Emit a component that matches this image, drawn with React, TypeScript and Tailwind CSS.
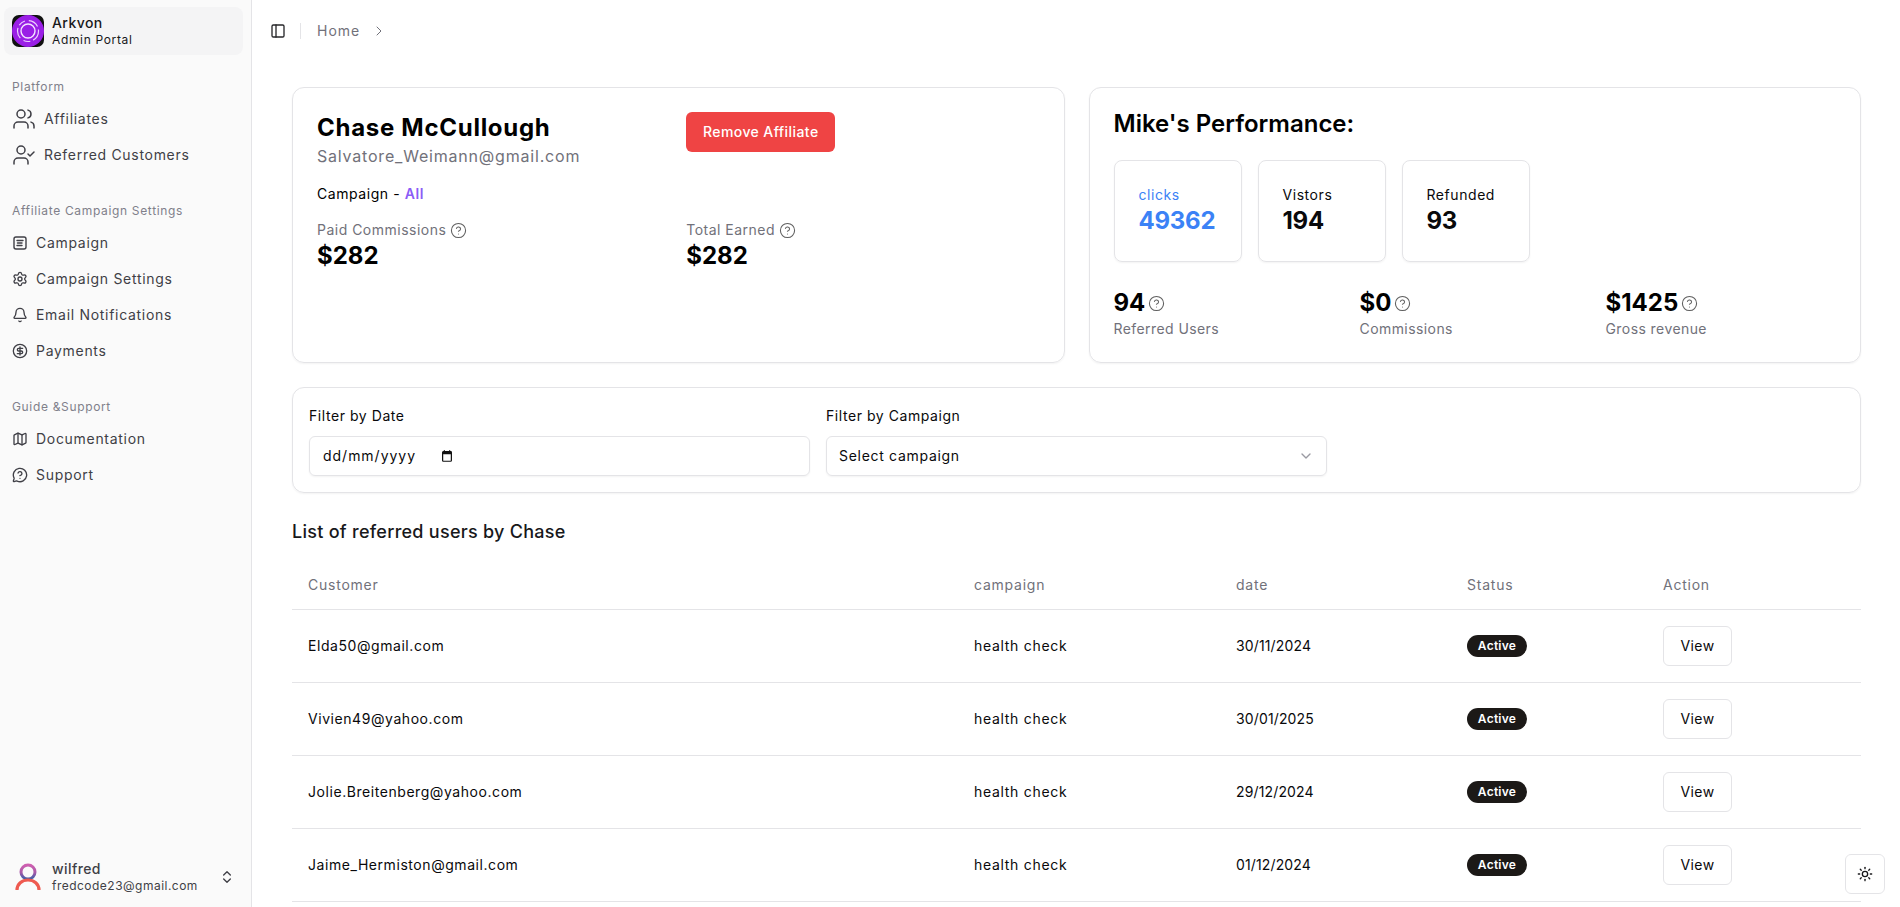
import {
  Bell,
  ChevronDown,
  ChevronRight,
  ChevronsUpDown,
  CircleDollarSign,
  CircleHelp,
  Map,
  MessageCircleQuestion,
  PanelLeft,
  Settings,
  Sun,
  UserCheck,
  Users,
} from 'lucide-react'

const font = { fontFamily: 'Inter, "Liberation Sans", sans-serif' }

const referred = [
  { email: 'Elda50@gmail.com', date: '30/11/2024' },
  { email: 'Vivien49@yahoo.com', date: '30/01/2025' },
  { email: 'Jolie.Breitenberg@yahoo.com', date: '29/12/2024' },
  { email: 'Jaime_Hermiston@gmail.com', date: '01/12/2024' },
]

function CampaignIcon() {
  return (
    <svg viewBox="0 0 16 16" fill="none" stroke="currentColor" strokeWidth="1.4" strokeLinecap="round" className="w-4 h-4 shrink-0">
      <rect x="2" y="2" width="12" height="12" rx="2" />
      <path d="M5 5.5h6M5.5 8h4.5M5 10.5h5" />
    </svg>
  )
}

function Logo() {
  return (
    <svg viewBox="0 0 32 32" className="w-8 h-8 shrink-0">
      <rect width="32" height="32" rx="7" fill="#111" />
      <circle cx="16" cy="16" r="16" fill="#9a1fe6" />
      <circle cx="16" cy="16" r="7" fill="none" stroke="#f4e6ff" strokeWidth="1.4" />
      <circle cx="16" cy="16" r="10.5" fill="none" stroke="#eccfff" strokeWidth="1.2" strokeDasharray="11 3 7 4" />
    </svg>
  )
}

function UserAvatar() {
  return (
    <svg viewBox="0 0 28 28" className="w-7 h-7 shrink-0">
      <defs>
        <linearGradient id="head" x1="0" y1="0" x2="0" y2="1">
          <stop offset="0" stopColor="#cf5fb0" />
          <stop offset="0.55" stopColor="#a65aa8" />
          <stop offset="1" stopColor="#3a5fa8" />
        </linearGradient>
      </defs>
      <circle cx="14" cy="9" r="7" fill="none" stroke="url(#head)" strokeWidth="3" />
      <path d="M3 27c0-6 5-10 11-10s11 4 11 10" fill="none" stroke="#ee5a50" strokeWidth="3.2" />
    </svg>
  )
}

function NavLabel({ children }: { children: string }) {
  return <div className="h-8 px-3 flex items-center text-xs text-[#80808a] tracking-[0.055em]">{children}</div>
}

function NavLink({ icon, label }: { icon: React.ReactNode; label: string }) {
  return (
    <a className="h-9 flex items-center gap-2 px-3 text-sm text-[#3f3f46] tracking-[0.05em]">
      {icon}
      {label}
    </a>
  )
}

function HelpIcon() {
  return <CircleHelp className="w-[17px] h-[17px] text-[#5f5f5f] shrink-0" strokeWidth={1.5} />
}

function StatBox({ label, value, blue }: { label: string; value: string; blue?: boolean }) {
  return (
    <div className={`w-32 h-[102px] rounded-lg border border-[#e4e4e7] shadow-xs pl-6 pt-6 ${blue ? 'text-[#3b82f6]' : 'text-[#09090b]'}`}>
      <div className="text-sm leading-5 tracking-[0.04em]">{label}</div>
      <div className="text-2xl font-bold leading-8 -tracking-[0.01em]">{value}</div>
    </div>
  )
}

function BottomStat({ value, label }: { value: string; label: string }) {
  return (
    <div>
      <div className="flex items-center gap-[3px] text-2xl font-bold leading-8 text-black">
        {value}
        <HelpIcon />
      </div>
      <div className="text-sm leading-5 text-[#71717a] tracking-[0.03em]">{label}</div>
    </div>
  )
}

export default function App() {
  return (
    <div style={font} className="flex h-[907px] overflow-hidden bg-white text-[#09090b]">
      <aside className="w-[252px] shrink-0 h-full flex flex-col bg-[#fafafa] border-r border-[#e4e4e7]">
        <div className="pt-[7px] px-1">
          <div className="h-12 w-[239px] rounded-lg bg-[#f4f4f5] flex items-center gap-2 px-2">
            <Logo />
            <div>
              <div className="text-sm leading-[18px] font-medium tracking-[0.03em] text-[#18181b]">Arkvon</div>
              <div className="text-xs leading-4 tracking-[0.055em] text-[#18181b]">Admin Portal</div>
            </div>
          </div>
        </div>
        <div className="mt-4">
          <NavLabel>Platform</NavLabel>
          <div className="-mt-0.5">
            <NavLink icon={<Users className="w-6 h-6 shrink-0" strokeWidth={1.5} />} label="Affiliates" />
            <NavLink icon={<UserCheck className="w-6 h-6 shrink-0" strokeWidth={1.5} />} label="Referred Customers" />
          </div>
        </div>
        <div className="mt-[22px]">
          <NavLabel>Affiliate Campaign Settings</NavLabel>
          <div className="-mt-0.5">
            <NavLink icon={<CampaignIcon />} label="Campaign" />
            <NavLink icon={<Settings className="w-4 h-4 shrink-0" />} label="Campaign Settings" />
            <NavLink icon={<Bell className="w-4 h-4 shrink-0" />} label="Email Notifications" />
            <NavLink icon={<CircleDollarSign className="w-4 h-4 shrink-0" />} label="Payments" />
          </div>
        </div>
        <div className="mt-[22px]">
          <NavLabel>Guide &amp;Support</NavLabel>
          <div className="-mt-0.5">
            <NavLink icon={<Map className="w-4 h-4 shrink-0" />} label="Documentation" />
            <NavLink icon={<MessageCircleQuestion className="w-4 h-4 shrink-0" />} label="Support" />
          </div>
        </div>
        <div className="mt-auto h-12 mb-[6px] flex items-center pl-[14px] pr-4">
          <UserAvatar />
          <div className="ml-[10px] flex-1">
            <div className="text-sm leading-[18px] font-medium tracking-[0.03em] text-[#3f3f46]">wilfred</div>
            <div className="text-xs leading-4 tracking-[0.04em] text-[#3f3f46]">fredcode23@gmail.com</div>
          </div>
          <ChevronsUpDown className="w-4 h-4 text-[#3f3f46]" />
        </div>
      </aside>

      <main className="flex-1 min-w-0">
        <header className="h-[62px] flex items-center pl-[18px]">
          <PanelLeft className="w-4 h-4 text-[#27272a]" />
          <div className="w-px h-4 bg-[#e4e4e7] ml-[14px] mr-4" />
          <span className="text-sm text-[#71717a] tracking-[0.07em]">Home</span>
          <ChevronRight className="w-4 h-4 ml-[11px] text-[#71717a]" strokeWidth={1.5} />
        </header>

        <div className="pt-[25px] pl-10 pr-[39px]">
          <div className="grid grid-cols-2 gap-6">
            <section className="h-[276px] rounded-xl border border-[#e4e4e7] shadow-xs p-6">
              <div className="grid grid-cols-2 gap-x-4">
                <div>
                  <h2 className="text-2xl leading-8 font-bold text-black tracking-[0.03em] whitespace-nowrap">Chase McCullough</h2>
                  <div className="text-base leading-6 text-[#71717a] tracking-[0.05em] whitespace-nowrap">Salvatore_Weimann@gmail.com</div>
                </div>
                <div>
                  <button className="w-[149px] h-10 rounded-md bg-[#ef4444] text-white text-sm font-medium tracking-[0.03em]">
                    Remove Affiliate
                  </button>
                </div>
              </div>
              <div className="mt-4 text-sm leading-5 text-black tracking-[0.04em]">
                Campaign - <span className="font-semibold text-[#8b5cf6]">All</span>
              </div>
              <div className="mt-4 grid grid-cols-2 gap-x-4">
                <div>
                  <div className="flex items-center gap-1 text-sm leading-5 text-[#71717a] tracking-[0.035em]">
                    Paid Commissions <HelpIcon />
                  </div>
                  <div className="text-2xl font-bold leading-8 text-black">$282</div>
                </div>
                <div>
                  <div className="flex items-center gap-1 text-sm leading-5 text-[#71717a] tracking-[0.035em]">
                    Total Earned <HelpIcon />
                  </div>
                  <div className="text-2xl font-bold leading-8 text-black">$282</div>
                </div>
              </div>
            </section>

            <section className="h-[276px] rounded-xl border border-[#e4e4e7] shadow-xs p-6">
              <h2 className="text-2xl leading-6 font-semibold text-black">Mike's Performance:</h2>
              <div className="mt-6 flex gap-4">
                <StatBox label="clicks" value="49362" blue />
                <StatBox label="Vistors" value="194" />
                <StatBox label="Refunded" value="93" />
              </div>
              <div className="mt-[25px] grid grid-cols-3 w-[738px]">
                <BottomStat value="94" label="Referred Users" />
                <BottomStat value="$0" label="Commissions" />
                <BottomStat value="$1425" label="Gross revenue" />
              </div>
            </section>
          </div>

          <section className="mt-6 rounded-xl border border-[#e4e4e7] shadow-xs p-4">
            <div className="grid grid-cols-3 gap-4">
              <div>
                <div className="h-6 flex items-center text-sm tracking-[0.04em]">Filter by Date</div>
                <div className="mt-2 h-10 rounded-md border border-[#e4e4e7] shadow-xs flex items-center pl-[13px] text-sm tracking-[0.07em]">
                  dd/mm/yyyy
                  <svg viewBox="0 0 16 16" className="w-[14px] h-[14px] ml-6" fill="none" stroke="#111" strokeWidth="1.4">
                    <rect x="3" y="3" width="10" height="11" rx="1" />
                    <path d="M3 4.5h10" strokeWidth="3" />
                    <path d="M5 1.5v2M11 1.5v2" />
                  </svg>
                </div>
              </div>
              <div>
                <div className="h-6 flex items-center text-sm tracking-[0.04em]">Filter by Campaign</div>
                <div className="mt-2 h-10 rounded-md border border-[#e4e4e7] shadow-xs flex items-center justify-between px-3 text-sm tracking-[0.05em]">
                  Select campaign
                  <ChevronDown className="w-4 h-4 text-[#9a9aa2]" />
                </div>
              </div>
            </div>
          </section>

          <h3 className="mt-[25px] text-lg leading-7 font-medium tracking-[0.015em] text-[#18181b]">List of referred users by Chase</h3>

          <table className="mt-[15px] w-full text-sm border-collapse table-fixed">
            <thead>
              <tr className="h-[48px] border-b border-[#e4e4e7] text-left text-[#71717a] tracking-[0.055em]">
                <th className="w-[666px] pl-4 font-normal">Customer</th>
                <th className="w-[262px] pl-4 font-normal">campaign</th>
                <th className="w-[231px] pl-4 font-normal">date</th>
                <th className="w-[196px] pl-4 font-normal">Status</th>
                <th className="pl-4 font-normal">Action</th>
              </tr>
            </thead>
            <tbody>
              {referred.map((row) => (
                <tr key={row.email} className="h-[73px] border-b border-[#e4e4e7] text-[#09090b]">
                  <td className="pl-4 tracking-[0.04em]">{row.email}</td>
                  <td className="pl-4 tracking-[0.05em]">health check</td>
                  <td className="pl-4 tracking-[0.01em]">{row.date}</td>
                  <td className="pl-4">
                    <span className="inline-flex items-center justify-center w-[60px] h-[22px] rounded-full bg-[#1c1917] text-white text-xs font-semibold tracking-[0.02em]">Active</span>
                  </td>
                  <td className="pl-4">
                    <button className="w-[69px] h-10 rounded-md border border-[#e4e4e7] bg-white text-sm tracking-[0.03em]">View</button>
                  </td>
                </tr>
              ))}
            </tbody>
          </table>
        </div>
      </main>

      <button className="fixed right-[15px] bottom-[13px] w-10 h-10 rounded-md border border-[#e4e4e7] bg-white flex items-center justify-center">
        <Sun className="w-4 h-4 text-[#18181b]" />
      </button>
    </div>
  )
}
